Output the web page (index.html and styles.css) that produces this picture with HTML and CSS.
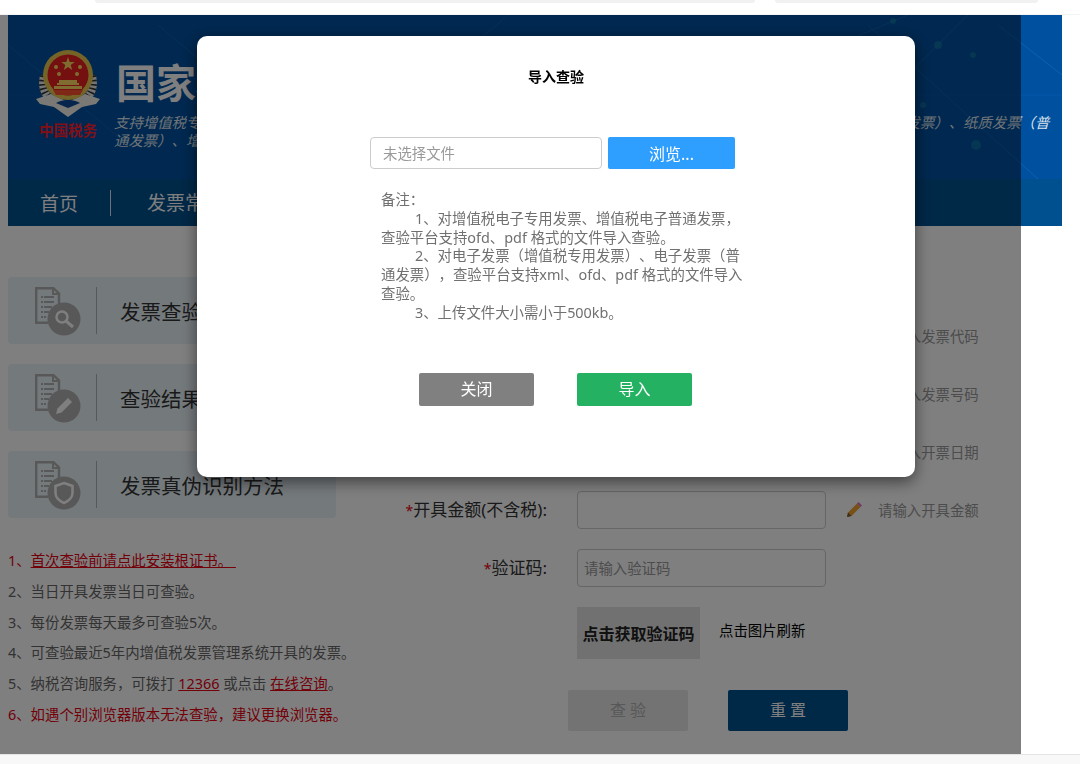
FILE: index.html
```html
<!DOCTYPE html>
<html lang="zh-CN">
  <head>
    <meta charset="UTF-8" />
    <title>发票查验</title>
    <link rel="stylesheet" href="styles.css">
  </head>
  <body>
    <svg class="defs" width="0" height="0">
      <symbol id="doc" viewBox="0 0 30 38">
        <path d="M24 25V6.500L18.500 1.200H1.200v34.500h12" fill="none" stroke="#b0b0b0" stroke-width="2.400" />
        <path d="M18 1v6h6" fill="none" stroke="#b0b0b0" stroke-width="2" />
        <path d="M6 10h13M6 15h13M6 20h11M6 25h8M6 30h5" stroke="#b0b0b0" stroke-width="2" stroke-dasharray="2 1 30" />
      </symbol>
      <symbol id="pencil" viewBox="0 0 16 16">
        <path d="M1 15l1-4.500L11 1.500l3.500 3.500L5.500 14z" fill="#f0a030" />
        <path d="M11 1.500L12.500 0 16 3.500 14.500 5z" fill="#e070c0" />
        <path d="M1 15l1-4.500 3.500 3.500z" fill="#7a5a30" />
      </symbol>
    </svg>

    <div class="top-strip">
      <div class="top-bar wide"></div>
      <div class="top-bar narrow"></div>
    </div>

    <header class="banner">
      <svg class="banner-lines" width="1054" height="164" viewBox="0 0 1054 164">
        <g stroke="#2f86d8" stroke-width="1" opacity="0.3" fill="none">
          <path d="M0 30L120 130M150 10L340 170M500 0L430 60M860 10L1030 164M780 50L900 0M990 10L1054 60M960 0L900 60" />
          <path d="M0 80H1054M600 40L820 120" opacity="0.4" />
        </g>
        <g fill="#2fc0b0" opacity="0.25">
          <circle cx="930" cy="30" r="4" />
          <circle cx="965" cy="40" r="3" />
          <circle cx="968" cy="130" r="5" />
          <circle cx="915" cy="90" r="3" />
          <circle cx="885" cy="6" r="3" />
        </g>
      </svg>
      <div class="banner-head">
        <div class="logo">
          <svg width="66" height="70" viewBox="0 0 66 70">
            <path d="M9 26c-3 11 1 22 13 28M57 26c3 11-1 22-13 28" fill="none" stroke="#e8e8e8" stroke-width="8" />
            <path d="M9 26c-3 11 1 22 13 28M57 26c3 11-1 22-13 28" fill="none" stroke="#303030" stroke-width="8" stroke-dasharray="1.500 2.500" />
            <path d="M1 49l15-5 17 8 17-8 15 5-4 5-14 3-14 10-14-10-14-3z" fill="#f4f2ea" />
            <path d="M21 53c6-4 18-4 24 0l-12 5z" fill="#0a4a9a" />
            <circle cx="33" cy="25" r="25" fill="#e8c850" />
            <circle cx="33" cy="25" r="20.500" fill="#e82020" />
            <path d="M33 7l1.700 5h5l-4 3 1.500 5-4.200-3-4.200 3 1.500-5-4-3h5z" fill="#ffd860" />
            <circle cx="21" cy="17" r="2" fill="#ffd860" />
            <circle cx="45" cy="17" r="2" fill="#ffd860" />
            <circle cx="24" cy="24" r="2" fill="#ffd860" />
            <circle cx="42" cy="24" r="2" fill="#ffd860" />
            <path d="M22 33h22v2H22zM24 30h18v3H24zM19 36h28v3H19z" fill="#ffd860" />
            <path d="M18 40h30l-3 5H21z" fill="#ff5030" />
          </svg>
          <span class="logo-text">中国税务</span>
        </div>
        <div class="banner-text">
          <h1>国家税务总局全国增值税发票查验平台</h1>
          <p>支持增值税专用发票、增值税电子专用发票、增值税普通发票、增值税电子普通发票、收费公路发票、电子发票（增值税专用发票）、纸质发票（普通发票）、增值税电子普通发票（通行费）、机动车销售统一发票</p>
        </div>
      </div>
      <nav class="nav">
        <a>首页</a>
        <a>发票常见问题</a>
      </nav>
    </header>

    <main class="content">
      <aside class="sidebar">
        <div class="card">
          <div class="card-icon">
            <svg class="doc" width="30" height="38"><use href="#doc" /></svg>
            <svg class="badge" width="34" height="34" viewBox="0 0 34 34">
              <circle cx="17" cy="17" r="16.500" fill="#b0b0b0" />
              <circle cx="15" cy="15" r="5.500" fill="none" stroke="#fff" stroke-width="2.500" />
              <path d="M19 19l7 6" stroke="#fff" stroke-width="3" />
            </svg>
          </div>
          <span class="card-title">发票查验说明</span>
        </div>
        <div class="card">
          <div class="card-icon">
            <svg class="doc" width="30" height="38"><use href="#doc" /></svg>
            <svg class="badge" width="34" height="34" viewBox="0 0 34 34">
              <circle cx="17" cy="17" r="16.500" fill="#b0b0b0" />
              <path d="M9 25l1.500-5.500L21 9l4 4-10.500 10.500z" fill="#fff" />
            </svg>
          </div>
          <span class="card-title">查验结果说明</span>
        </div>
        <div class="card">
          <div class="card-icon">
            <svg class="doc" width="30" height="38"><use href="#doc" /></svg>
            <svg class="badge" width="34" height="34" viewBox="0 0 34 34">
              <circle cx="17" cy="17" r="16.500" fill="#b0b0b0" />
              <path d="M17 7l8.500 3v7c0 5-4 8-8.500 10-4.500-2-8.500-5-8.500-10v-7z" fill="none" stroke="#fff" stroke-width="2.500" />
            </svg>
          </div>
          <span class="card-title">发票真伪识别方法</span>
        </div>
        <ol class="tips">
          <li class="red">1、<a>首次查验前请点此安装根证书。&nbsp;</a></li>
          <li>2、当日开具发票当日可查验。</li>
          <li>3、每份发票每天最多可查验5次。</li>
          <li>4、可查验最近5年内增值税发票管理系统开具的发票。</li>
          <li>5、纳税咨询服务，可拨打 <a>12366</a> 或点击 <a>在线咨询</a>。</li>
          <li class="red">6、如遇个别浏览器版本无法查验，建议更换浏览器。</li>
        </ol>
      </aside>

      <form class="query-form">
        <div class="row">
          <label><i>*</i>发票代码:</label>
          <input type="text" />
          <span class="hint"><svg width="16" height="16"><use href="#pencil" /></svg><span>请输入发票代码</span></span>
        </div>
        <div class="row">
          <label><i>*</i>发票号码:</label>
          <input type="text" />
          <span class="hint"><svg width="16" height="16"><use href="#pencil" /></svg><span>请输入发票号码</span></span>
        </div>
        <div class="row">
          <label><i>*</i>开票日期:</label>
          <input type="text" />
          <span class="hint"><svg width="16" height="16"><use href="#pencil" /></svg><span>请输入开票日期</span></span>
        </div>
        <div class="row">
          <label><i>*</i>开具金额(不含税):</label>
          <input type="text" />
          <span class="hint"><svg width="16" height="16"><use href="#pencil" /></svg><span>请输入开具金额</span></span>
        </div>
        <div class="row">
          <label><i>*</i>验证码:</label>
          <input type="text" placeholder="请输入验证码" />
        </div>
        <div class="captcha-row">
          <div class="captcha">点击获取验证码</div>
          <span class="captcha-tip">点击图片刷新</span>
        </div>
        <div class="form-actions">
          <button type="button" class="btn-query">查 验</button>
          <button type="button" class="btn-reset">重 置</button>
        </div>
      </form>
    </main>

    <footer class="footer"></footer>

    <div class="overlay">
      <div class="modal">
        <h2>导入查验</h2>
        <div class="file-row">
          <input type="text" placeholder="未选择文件" />
          <button type="button" class="btn-browse">浏览...</button>
        </div>
        <div class="note">
          <p>备注：</p>
          <p class="indent">1、对增值税电子专用发票、增值税电子普通发票，查验平台支持ofd、pdf 格式的文件导入查验。</p>
          <p class="indent">2、对电子发票（增值税专用发票）、电子发票（普通发票），查验平台支持xml、ofd、pdf 格式的文件导入查验。</p>
          <p class="indent">3、上传文件大小需小于500kb。</p>
        </div>
        <div class="modal-actions">
          <button type="button" class="btn-close">关闭</button>
          <button type="button" class="btn-import">导入</button>
        </div>
      </div>
    </div>
  </body>
</html>
```

FILE: styles.css
```css
* {
  box-sizing: border-box;
}
html,
body {
  height: 100%;
}
body {
  margin: 0;
  background: #fff;
  color: #333;
  font-family: "Noto Sans", "Noto Sans CJK SC", sans-serif;
  font-size: 14.4px;
  text-spacing-trim: space-all;
  overflow: hidden;
}
.defs {
  position: absolute;
}
.top-strip {
  display: flex;
  gap: 20px;
  height: 15px;
  padding-left: 95px;
  border-bottom: 1px solid #f4f4f4;
}
.top-bar {
  height: 3px;
  background: #f1f1f1;
  border-radius: 0 0 3px 3px;
}
.top-bar.wide {
  width: 660px;
}
.top-bar.narrow {
  width: 263px;
}

/* banner */
.banner {
  position: relative;
  width: 1054px;
  height: 211px;
  margin-left: 8px;
  background: #0050a0;
  overflow: hidden;
}
.banner-lines {
  position: absolute;
  left: 0;
  top: 0;
}
.banner-head {
  position: relative;
  display: flex;
  height: 164px;
  padding: 35px 0 0 27px;
}
.logo {
  width: 79px;
  flex-shrink: 0;
}
.logo svg {
  display: block;
}
.logo-text {
  display: block;
  width: 66px;
  margin: -1px 0 0 4px;
  color: #ff2030;
  font-size: 14.500px;
  font-weight: 700;
  line-height: 22px;
  white-space: nowrap;
}
.banner-text {
  width: 940px;
}
.banner-text h1 {
  margin: 6px 0 0 2px;
  color: #fff;
  font-size: 40px;
  font-weight: 700;
  line-height: 54px;
  white-space: nowrap;
}
.banner-text p {
  margin: 4px 0 0;
  color: #dfe6ee;
  font-size: 14.400px;
  font-style: italic;
  line-height: 18px;
}
.nav {
  position: relative;
  display: flex;
  align-items: center;
  height: 47px;
  background: #00508f;
  padding-left: 32px;
}
.nav a {
  color: #fff;
  font-size: 19px;
}
.nav a + a {
  margin-left: 32px;
  padding-left: 36px;
  border-left: 1px solid #dfe6ee;
  line-height: 26px;
}

/* main */
.content {
  display: flex;
  height: 528px;
  padding: 51px 0 0 8px;
}
.sidebar {
  width: 328px;
  flex-shrink: 0;
}
.card {
  display: flex;
  align-items: center;
  height: 67px;
  margin-bottom: 20px;
  background: #e9f2f9;
  border-radius: 4px;
}
.card-icon {
  position: relative;
  width: 89px;
  height: 47px;
  margin-right: 23px;
  border-right: 1px solid #b0b0b0;
}
.doc {
  position: absolute;
  left: 27px;
  top: 0;
}
.badge {
  position: absolute;
  left: 39px;
  top: 15px;
}
.card-title {
  font-size: 20.500px;
  white-space: nowrap;
}
.tips {
  margin: 28px 0 0;
  padding: 0;
  list-style: none;
  line-height: 30.800px;
  white-space: nowrap;
  color: #666;
}
.tips a {
  color: #e60012;
  text-decoration: underline;
}
.tips .red {
  color: #e60012;
}

/* form */
.query-form {
  padding-top: 40px;
}
.row {
  display: flex;
  align-items: center;
  height: 38px;
  margin-bottom: 20px;
}
.row label {
  width: 211px;
  height: 38px;
  margin-right: 30px;
  color: #333;
  font-size: 17px;
  line-height: 38px;
  text-align: right;
  white-space: nowrap;
}
.row label i {
  color: #e60012;
  font-size: 14px;
  font-style: normal;
}
.row input {
  width: 249px;
  height: 38px;
  padding: 0 6px;
  border: 1px solid #ccc;
  border-radius: 4px;
  background: #fff;
  font: inherit;
}
.row input::placeholder {
  color: #999;
}
.hint {
  display: flex;
  align-items: center;
  gap: 16px;
  margin-left: 20px;
  color: #999;
  white-space: nowrap;
}
.hint span {
  padding-bottom: 2px;
}
.captcha-row {
  display: flex;
  align-items: center;
  gap: 19px;
  margin-left: 241px;
}
.captcha {
  width: 123px;
  height: 52px;
  background: #e2e2e2;
  color: #222;
  font-family: "Noto Sans CJK SC", sans-serif;
  font-size: 16px;
  font-weight: 700;
  line-height: 52px;
  text-align: center;
  white-space: nowrap;
}
.captcha-tip {
  margin-top: -8px;
  color: #000;
}
.form-actions {
  display: flex;
  gap: 40px;
  margin: 31px 0 0 232px;
}
.form-actions button {
  width: 120px;
  height: 41px;
  padding: 0 0 4px;
  border: 0;
  border-radius: 2px;
  font: inherit;
  font-size: 16px;
}
.btn-query {
  background: #e6e6e6;
  color: #b0b0b0;
}
.btn-reset {
  background: #00508f;
  color: #fff;
}
.footer {
  height: 10px;
  background: #f8f8f8;
  border-top: 1px solid #e4e4e4;
}

/* dialog */
.overlay {
  position: fixed;
  left: 0;
  top: 15px;
  width: 1021px;
  height: 739px;
  background: rgba(0, 0, 0, 0.5);
}
.modal {
  position: absolute;
  left: 197px;
  top: 21px;
  width: 718px;
  height: 441px;
  padding-top: 32px;
  background: #fff;
  border-radius: 10px;
  box-shadow: 0 5px 15px rgba(0, 0, 0, 0.5);
}
.modal h2 {
  margin: 0;
  color: #000;
  font-size: 14px;
  font-weight: 700;
  line-height: 18px;
  text-align: center;
}
.file-row {
  display: flex;
  gap: 6px;
  margin: 51px 0 0 173px;
}
.file-row input {
  width: 232px;
  height: 32px;
  padding: 0 12px;
  border: 1px solid #ccc;
  border-radius: 4px;
  font: inherit;
}
.file-row input::placeholder {
  color: #999;
}
.btn-browse {
  width: 127px;
  height: 32px;
  border: 0;
  border-radius: 2px;
  background: #2e9fff;
  color: #fff;
  font: inherit;
  font-size: 16px;
}
.note {
  width: 368px;
  margin: 22px 0 0 184px;
  color: #707070;
  line-height: 18.800px;
}
.note p {
  margin: 0;
}
.note .indent {
  text-indent: 34px;
}
.modal-actions {
  display: flex;
  gap: 43px;
  margin: 50px 0 0 222px;
}
.modal-actions button {
  width: 115px;
  height: 33px;
  padding: 0 0 2px;
  border: 0;
  border-radius: 2px;
  color: #fff;
  font: inherit;
  font-size: 16px;
}
.btn-close {
  background: #808080;
}
.btn-import {
  background: #24b262;
}
```
